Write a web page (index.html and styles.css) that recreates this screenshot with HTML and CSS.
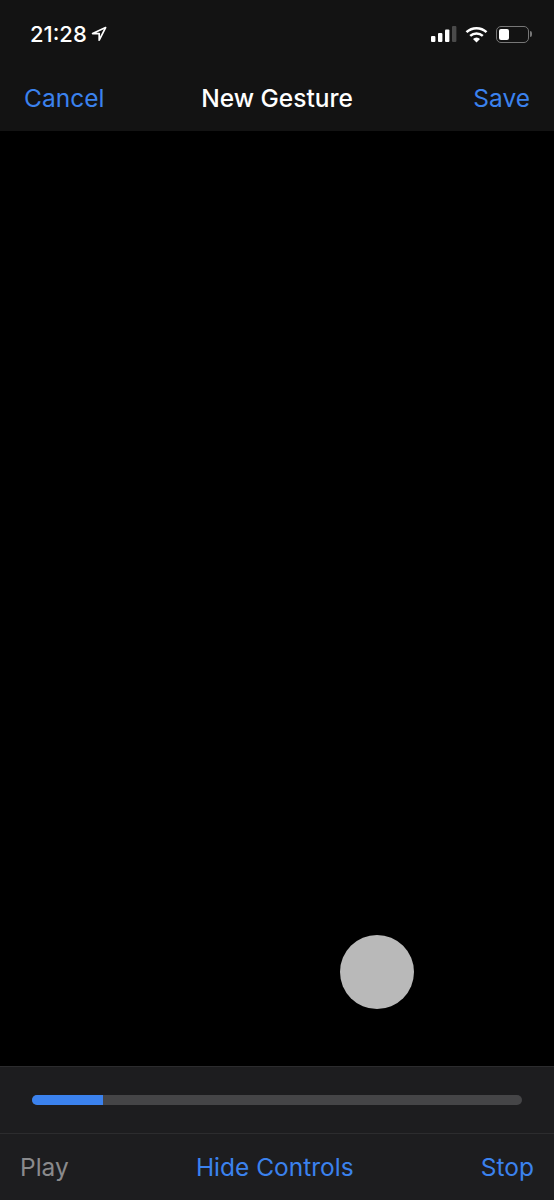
FILE: index.html
```html
<!DOCTYPE html>
<html lang="en">
<head>
<meta charset="utf-8">
<title>New Gesture</title>
<link rel="stylesheet" href="styles.css">
</head>
<body>
<div class="app">
  <header class="top">
    <div class="status">
      <div class="status-left">
        <span class="time">21:28</span>
        <svg class="loc" width="16" height="16" viewBox="0 0 16 16"><path d="M14.6 1.6 1.6 7.6h6.6v6.6z" fill="none" stroke="#fff" stroke-width="1.7" stroke-linejoin="round"/></svg>
      </div>
      <div class="status-right">
        <svg class="signal" width="26" height="18" viewBox="0 0 26 18"><rect x="0" y="11" width="4.4" height="6" rx="1" fill="#fff"/><rect x="7" y="8" width="4.4" height="9" rx="1" fill="#fff"/><rect x="14" y="4.5" width="4.4" height="12.5" rx="1" fill="#fff"/><rect x="21" y="1" width="4.4" height="16" rx="1" fill="#4a4a4a"/></svg>
        <svg class="wifi" width="23" height="17" viewBox="0 0 23 17"><path d="M1.5 6.2a14.4 14.4 0 0 1 20 0" fill="none" stroke="#fff" stroke-width="2.5"/><path d="M5.2 9.9a9.2 9.2 0 0 1 12.6 0" fill="none" stroke="#fff" stroke-width="2.5"/><path d="M8 13a4.6 4.6 0 0 1 7 0l-3.5 3.5z" fill="#fff"/></svg>
        <div class="battery"><div class="battery-shell"><div class="battery-level"></div></div><div class="battery-cap"></div></div>
      </div>
    </div>
    <nav class="nav">
      <a class="action nav-left">Cancel</a>
      <h1 class="title">New Gesture</h1>
      <a class="action nav-right">Save</a>
    </nav>
  </header>
  <main class="canvas">
    <div class="touch"></div>
  </main>
  <footer class="controls">
    <div class="progress-row">
      <div class="track"><div class="fill" style="width:14.5%"></div></div>
    </div>
    <div class="toolbar">
      <a class="action disabled">Play</a>
      <a class="action">Hide Controls</a>
      <a class="action">Stop</a>
    </div>
  </footer>
</div>
</body>
</html>
```
FILE: styles.css
```css
* { box-sizing: border-box; }
html, body { margin: 0; padding: 0; background: #000; }
body { font-family: Inter, "Liberation Sans", sans-serif; }
.app { width: 554px; height: 1200px; display: flex; flex-direction: column; overflow: hidden; }

.top { height: 131px; background: #131313; display: flex; flex-direction: column; }
.status { height: 66px; padding: 20px 22px 0 30px; display: flex; justify-content: space-between; align-items: flex-start; }
.status-left { display: flex; align-items: center; gap: 4px; height: 28px; }
.time { color: #fff; font-size: 22px; font-weight: 500; line-height: 28px; letter-spacing: 0; }
.status-right { display: flex; align-items: center; gap: 8px; height: 28px; }
.battery { display: flex; align-items: center; gap: 1px; }
.battery-shell { width: 33px; height: 17px; border: 1.5px solid #777; border-radius: 5px; padding: 2px; }
.battery-level { width: 10px; height: 100%; background: #fff; border-radius: 2px; }
.battery-cap { width: 2px; height: 6px; background: #777; border-radius: 0 2px 2px 0; }

.nav { flex: 1; display: grid; grid-template-columns: 1fr auto 1fr; align-items: center; padding: 0 24px 2px; }
.nav-right { justify-self: end; }
.title { margin: 0; color: #fff; font-size: 24.5px; font-weight: 500; line-height: 30px; }
.action { color: #3b82ee; font-size: 24.5px; font-weight: 400; line-height: 30px; }
.disabled { color: #8a8a8c; }

.canvas { flex: 1; background: #000; position: relative; }
.touch { position: absolute; left: 340px; top: 804px; width: 74px; height: 74px; border-radius: 50%; background: #b9b9b9; }

.controls { height: 134px; background: #1d1d1f; border-top: 1px solid #2c2c2e; display: flex; flex-direction: column; }
.progress-row { height: 66px; padding: 0 32px; display: flex; align-items: center; }
.track { flex: 1; height: 10px; background: #454547; border-radius: 5px; overflow: hidden; }
.fill { height: 100%; background: #3b82ee; }
.toolbar { flex: 1; border-top: 1px solid #2c2c2e; padding: 0 20px 0; display: flex; justify-content: space-between; align-items: center; }
```
